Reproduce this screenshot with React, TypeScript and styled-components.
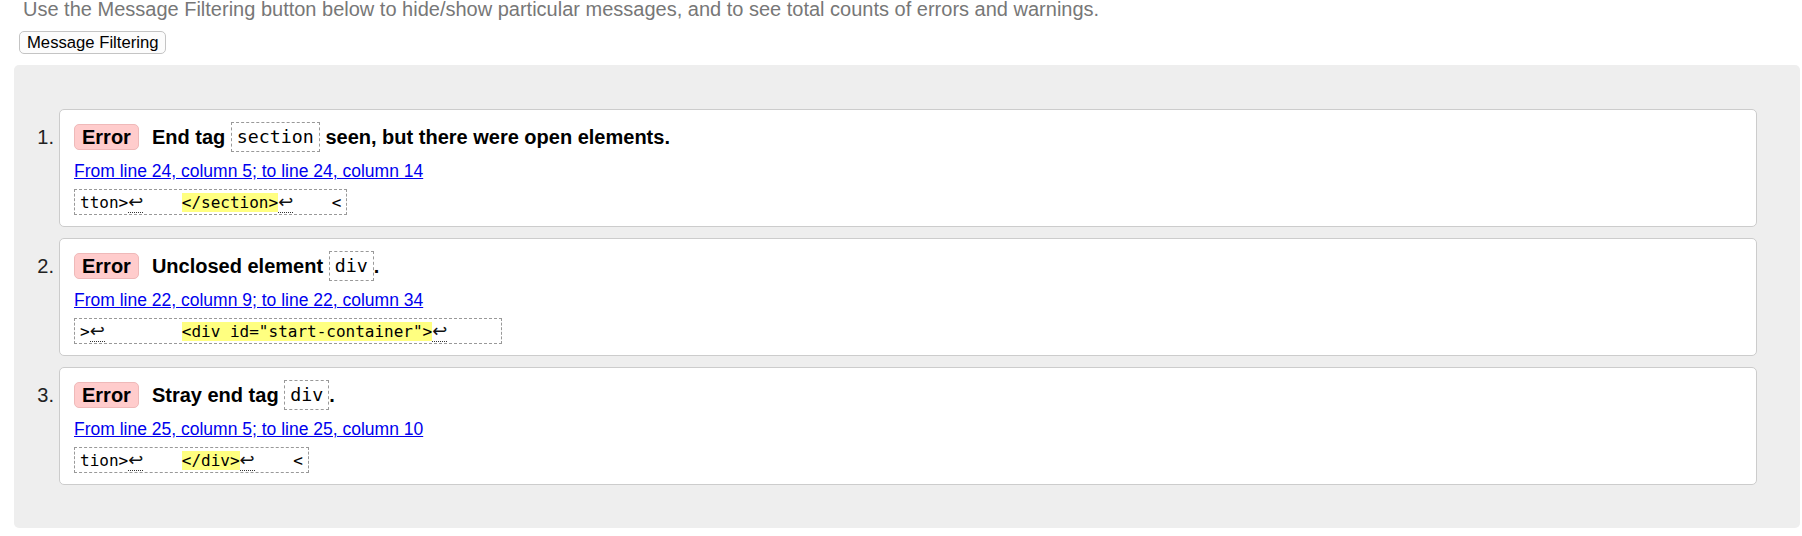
import React from "react";
import styled, { createGlobalStyle } from "styled-components";

const GlobalStyle = createGlobalStyle`
  html, body {
    margin: 0;
    padding: 0;
    background: #ffffff;
    font-family: "Liberation Sans", Arial, sans-serif;
    color: #000;
  }
`;

const Page = styled.div`
  padding: 0 2px 8px 14px;
  overflow: hidden;
`;

const Intro = styled.p`
  margin: 0;
  padding-left: 9px;
  font-size: 20px;
  line-height: 18px;
  color: #777777;
`;

const FilterButton = styled.button`
  display: block;
  box-sizing: border-box;
  margin: 13px 0 0 5px;
  height: 23px;
  padding: 1px 7px;
  font-family: "Liberation Sans", Arial, sans-serif;
  font-size: 16.67px;
  line-height: 19px;
  color: #000;
  background: #fcfcfc;
  border: 1px solid #c4c4c4;
  border-radius: 5px;
`;

const Results = styled.ol`
  list-style: none;
  margin: 11px 0 0;
  padding: 44px 43px 43px 0;
  background: #eeeeee;
  border-radius: 5px;
  display: flex;
  flex-direction: column;
  gap: 11px;
`;

const Item = styled.li`
  display: flex;
  align-items: flex-start;
`;

const Index = styled.span`
  flex: 0 0 45px;
  box-sizing: border-box;
  padding: 17px 5px 0 0;
  text-align: right;
  font-size: 20px;
  line-height: 23px;
  color: #222;
`;

const Card = styled.div`
  flex: 1;
  box-sizing: border-box;
  height: 118px;
  padding: 12px 14px 0;
  background: #ffffff;
  border: 1px solid #cccccc;
  border-radius: 5px;
`;

const TitleRow = styled.div`
  display: flex;
  align-items: center;
  height: 30px;
  font-size: 20px;
  line-height: 23px;
  font-weight: bold;
  white-space: pre;
`;

const Badge = styled.span`
  box-sizing: border-box;
  height: 26px;
  padding: 0 7px;
  margin-right: 13px;
  line-height: 24px;
  background: #ffcccc;
  border: 1px solid #efb9b9;
  border-radius: 5px;
  font-weight: bold;
`;

const Code = styled.code`
  box-sizing: border-box;
  height: 30px;
  padding: 0 5px;
  font-family: "DejaVu Sans Mono", "Liberation Mono", monospace;
  font-size: 18.3px;
  font-weight: normal;
  line-height: 28px;
  background: #fff;
  border: 1px dashed #999999;
`;

const Location = styled.a`
  display: block;
  width: fit-content;
  margin-top: 9px;
  font-size: 17.5px;
  line-height: 20px;
  color: #0000ee;
  text-decoration: underline;
`;

const Extract = styled.pre`
  display: block;
  width: fit-content;
  margin: 8px 0 0;
  padding: 3px 5px 1px;
  font-family: "DejaVu Sans Mono", "Liberation Mono", monospace;
  font-size: 16px;
  line-height: 20px;
  color: #000;
  border: 1px dashed #999999;
`;

const Mark = styled.b`
  font-weight: normal;
  background: #ffff80;
`;

const LineBreak = styled.span`
  font-family: "DejaVu Sans", sans-serif;
  font-size: 18px;
  line-height: 16px;
  color: #111;
  border-bottom: 1px dotted #333;
`;

type Msg = {
  before: string;
  code: string;
  after: string;
  location: string;
  pre: string;
  mark: string;
  post: string;
  tail: string;
};

const messages: Msg[] = [
  {
    before: "End tag ",
    code: "section",
    after: " seen, but there were open elements.",
    location: "From line 24, column 5; to line 24, column 14",
    pre: "tton>",
    mark: "</section>",
    post: "    ",
    tail: "    <",
  },
  {
    before: "Unclosed element ",
    code: "div",
    after: ".",
    location: "From line 22, column 9; to line 22, column 34",
    pre: ">",
    mark: '<div id="start-container">',
    post: "        ",
    tail: "     ",
  },
  {
    before: "Stray end tag ",
    code: "div",
    after: ".",
    location: "From line 25, column 5; to line 25, column 10",
    pre: "tion>",
    mark: "</div>",
    post: "    ",
    tail: "    <",
  },
];

export default function App() {
  return (
    <>
      <GlobalStyle />
      <Page>
        <Intro>
          Use the Message Filtering button below to hide/show particular messages, and to see total counts of errors and warnings.
        </Intro>
        <FilterButton type="button">Message Filtering</FilterButton>
        <Results>
          {messages.map((m, i) => (
            <Item key={i}>
              <Index>{i + 1}.</Index>
              <Card>
                <TitleRow>
                  <Badge>Error</Badge>
                  <span>{m.before}</span>
                  <Code>{m.code}</Code>
                  <span>{m.after}</span>
                </TitleRow>
                <Location href="#">{m.location}</Location>
                <Extract>
                  {m.pre}
                  <LineBreak title="Line break">↩</LineBreak>
                  {m.post}
                  <Mark>{m.mark}</Mark>
                  <LineBreak title="Line break">↩</LineBreak>
                  {m.tail}
                </Extract>
              </Card>
            </Item>
          ))}
        </Results>
      </Page>
    </>
  );
}
